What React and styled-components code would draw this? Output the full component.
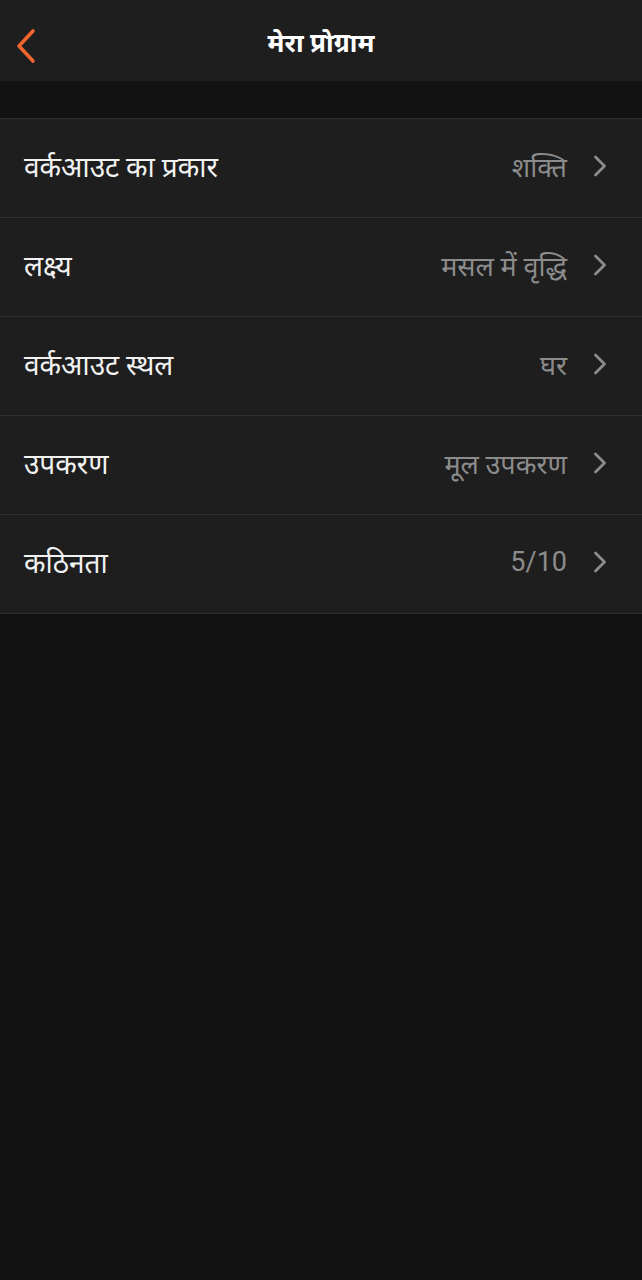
import React from 'react'
import styled, { createGlobalStyle } from 'styled-components'

const rows = [
  { label: 'वर्कआउट का प्रकार', value: 'शक्ति' },
  { label: 'लक्ष्य', value: 'मसल में वृद्धि' },
  { label: 'वर्कआउट स्थल', value: 'घर' },
  { label: 'उपकरण', value: 'मूल उपकरण' },
  { label: 'कठिनता', value: '5/10' },
]

const GlobalStyle = createGlobalStyle`
  html, body {
    margin: 0;
    padding: 0;
    background: #121212;
  }
  body {
    font-family: Roboto, "Noto Sans", "Noto Sans Devanagari", sans-serif;
    color: #fff;
  }
`

const Page = styled.div`
  min-height: 1280px;
  background: #121212;
`

const Header = styled.header`
  height: 81px;
  background: #1e1e1e;
  display: grid;
  grid-template-columns: 64px 1fr 64px;
  align-items: center;
`

const BackButton = styled.button`
  border: 0;
  background: none;
  padding: 10px 0 0 16px;
  height: 81px;
  display: flex;
  align-items: center;
  cursor: pointer;
`

const Title = styled.h1`
  margin: 0;
  padding-top: 3px;
  text-align: center;
  font-size: 26px;
  font-weight: 700;
  color: #fff;
`

const Spacer = styled.div`
  height: 37px;
`

const List = styled.ul`
  list-style: none;
  margin: 0;
  padding: 0;
  border-top: 1px solid #2e2e2e;
`

const Row = styled.li`
  height: 98px;
  box-sizing: border-box;
  height: 99px;
  background: #1e1e1e;
  border-bottom: 1px solid #2e2e2e;
  display: flex;
  align-items: center;
  padding: 0 35px 4px 24px;
  gap: 26px;
`

const Label = styled.span`
  flex: 1;
  font-size: 28px;
  color: #f2f2f2;
`

const Value = styled.span`
  font-size: 27px;
  color: #8c8c8c;
`

const Chevron = ({ color }) => (
  <svg width="14" height="22" viewBox="0 0 14 22" fill="none">
    <path d="M2.5 2l9 9-9 9" stroke={color} strokeWidth="2.8" strokeLinecap="round" strokeLinejoin="round" />
  </svg>
)

const BackIcon = () => (
  <svg width="20" height="36" viewBox="0 0 20 36" fill="none">
    <path d="M17 3L3 18l14 15" stroke="#f2652e" strokeWidth="3.6" strokeLinecap="round" strokeLinejoin="round" />
  </svg>
)

export default function App() {
  return (
    <Page>
      <GlobalStyle />
      <Header>
        <BackButton aria-label="back">
          <BackIcon />
        </BackButton>
        <Title>मेरा प्रोग्राम</Title>
        <span />
      </Header>
      <Spacer />
      <List>
        {rows.map((r) => (
          <Row key={r.label}>
            <Label>{r.label}</Label>
            <Value>{r.value}</Value>
            <Chevron color="#8c8c8c" />
          </Row>
        ))}
      </List>
    </Page>
  )
}
